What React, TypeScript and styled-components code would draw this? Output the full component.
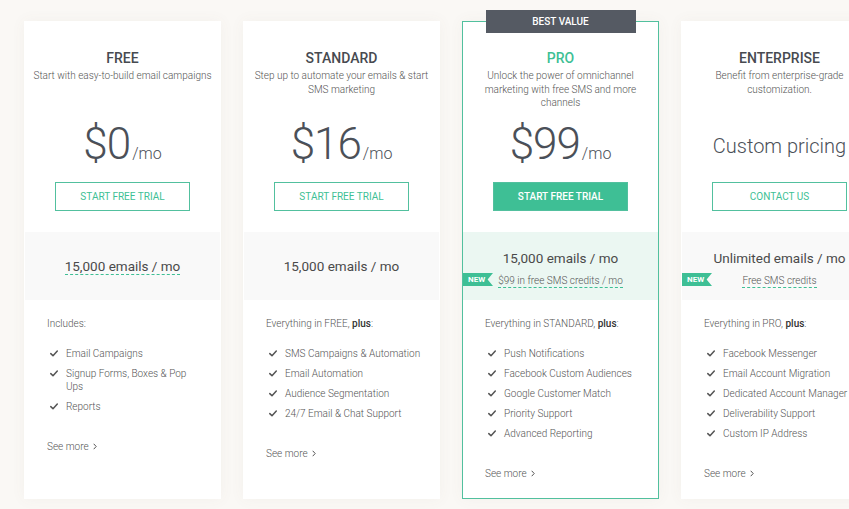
import React from "react";
import styled, { createGlobalStyle } from "styled-components";

const GREEN = "#3ebf95";
const BORDER_GREEN = "#52c09e";

const GlobalStyle = createGlobalStyle`
  html, body { margin: 0; padding: 0; background: #faf8f5; overflow: hidden; }
  body { font-family: Roboto, "Noto Sans", "Liberation Sans", sans-serif; -webkit-font-smoothing: antialiased; }
  * { box-sizing: border-box; }
`;

const Page = styled.div`
  display: flex;
  gap: 22px;
  padding: 21px 0 0 24px;
  height: 509px;
`;

const Card = styled.div<{ $featured?: boolean }>`
  position: relative;
  flex: 0 0 197px;
  height: 478px;
  background: #fff;
  border: 1px solid ${(p) => (p.$featured ? BORDER_GREEN : "transparent")};
  display: flex;
  flex-direction: column;
  box-shadow: 0 0 14px rgba(120, 100, 70, 0.05);
`;

const BestValue = styled.div`
  position: absolute;
  top: -12px;
  left: 50%;
  transform: translateX(-50%);
  width: 150px;
  height: 23px;
  background: #555a63;
  color: #fff;
  font-size: 10px;
  font-weight: 500;
  line-height: 23px;
  text-align: center;
`;

const Header = styled.div`
  height: 210px;
  padding-top: 28px;
  display: flex;
  flex-direction: column;
  align-items: center;
`;

const Title = styled.div<{ $featured?: boolean }>`
  font-size: 14px;
  line-height: 16px;
  font-weight: 500;
  color: ${(p) => (p.$featured ? GREEN : "#474a50")};
`;

const Desc = styled.div`
  margin-top: 3px;
  height: 40px;
  padding: 0 6px;
  font-size: 10px;
  line-height: 13.5px;
  font-weight: 300;
  color: #555;
  text-align: center;
`;

const PriceRow = styled.div`
  height: 64px;
  width: 100%;
  display: flex;
  align-items: flex-end;
  justify-content: center;
  padding-bottom: 7px;
`;

const Price = styled.div`
  display: inline-flex;
  align-items: baseline;
  color: #4b5058;
  font-weight: 300;
`;

const Amount = styled.span`
  font-size: 44px;
  line-height: 44px;
  letter-spacing: -1px;
`;

const Per = styled.span`
  font-size: 16px;
  line-height: 16px;
  margin-left: 2px;
`;

const CustomPrice = styled.div`
  font-size: 20px;
  line-height: 20px;
  font-weight: 300;
  color: #4b5058;
  margin-bottom: 10px;
`;

const Button = styled.button<{ $filled?: boolean }>`
  margin-top: 9px;
  width: 135px;
  height: 29px;
  border: 1px solid ${BORDER_GREEN};
  background: ${(p) => (p.$filled ? GREEN : "#fff")};
  color: ${(p) => (p.$filled ? "#fff" : GREEN)};
  font-family: inherit;
  font-size: 10px;
  font-weight: ${(p) => (p.$filled ? 500 : 400)};
  text-transform: uppercase;
  padding: 0;
  cursor: pointer;
`;

const Band = styled.div<{ $featured?: boolean; $stacked?: boolean }>`
  position: relative;
  height: 68px;
  background: ${(p) => (p.$featured ? "#ebf7f2" : "#f9f9f9")};
  display: flex;
  flex-direction: column;
  align-items: center;
  justify-content: center;
  padding-top: ${(p) => (p.$stacked ? 5 : 0)}px;
`;

const Emails = styled.span<{ $dashed?: boolean }>`
  font-size: 13.5px;
  line-height: 16px;
  color: #4a4a4a;
  border-bottom: 1px dashed ${(p) => (p.$dashed ? GREEN : "transparent")};
`;

const SubCredit = styled.span`
  margin-top: 8px;
  font-size: 10px;
  line-height: 12px;
  font-weight: 300;
  color: #555;
  border-bottom: 1px dashed ${GREEN};
`;

const NewBadge = styled.span`
  position: absolute;
  left: 0;
  top: 41px;
  width: 30px;
  height: 13px;
  padding-left: 5px;
  background: ${GREEN};
  color: #fff;
  font-size: 8px;
  font-weight: 700;
  line-height: 13px;
  clip-path: polygon(0 0, 100% 0, 82% 50%, 100% 100%, 0 100%);
`;

const Features = styled.div`
  flex: 1;
  padding: 17px 18px 0 22px;
`;

const FeatHead = styled.div`
  font-size: 10px;
  line-height: 13px;
  font-weight: 300;
  color: #555;
  strong { font-weight: 500; color: #333; }
`;

const List = styled.ul`
  margin: 17px 0 0;
  padding: 0 0 0 3px;
  list-style: none;
  display: flex;
  flex-direction: column;
  gap: 7px;
`;

const Item = styled.li`
  display: flex;
  gap: 8px;
  font-size: 10px;
  line-height: 13px;
  font-weight: 300;
  color: #555;
  svg { flex: 0 0 8px; margin-top: 3px; }
`;

const SeeMore = styled.a`
  margin-top: 27px;
  display: inline-flex;
  align-items: center;
  gap: 4px;
  font-size: 10px;
  line-height: 13px;
  font-weight: 300;
  color: #555;
  text-decoration: none;
`;

const Check = () => (
  <svg width="8" height="7" viewBox="0 0 8 7" fill="none">
    <polyline points="0.8,3.6 3,5.8 7.3,1" stroke="#555" strokeWidth="1.5" strokeLinecap="round" strokeLinejoin="round" />
  </svg>
);

const Chevron = () => (
  <svg width="4" height="7" viewBox="0 0 4 7" fill="none">
    <polyline points="0.7,0.8 3.2,3.5 0.7,6.2" stroke="#555" strokeWidth="1" />
  </svg>
);

type Plan = {
  name: string;
  desc: string;
  price?: string;
  button: string;
  emails: string;
  dashed?: boolean;
  credit?: string;
  featured?: boolean;
  head: React.ReactNode;
  items: string[];
};

const plans: Plan[] = [
  {
    name: "FREE",
    desc: "Start with easy-to-build email campaigns",
    price: "$0",
    button: "Start free trial",
    emails: "15,000 emails / mo",
    dashed: true,
    head: "Includes:",
    items: ["Email Campaigns", "Signup Forms, Boxes & Pop Ups", "Reports"],
  },
  {
    name: "STANDARD",
    desc: "Step up to automate your emails & start SMS marketing",
    price: "$16",
    button: "Start free trial",
    emails: "15,000 emails / mo",
    head: (
      <>
        Everything in FREE, <strong>plus</strong>:
      </>
    ),
    items: ["SMS Campaigns & Automation", "Email Automation", "Audience Segmentation", "24/7 Email & Chat Support"],
  },
  {
    name: "PRO",
    desc: "Unlock the power of omnichannel marketing with free SMS and more channels",
    price: "$99",
    button: "Start free trial",
    emails: "15,000 emails / mo",
    credit: "$99 in free SMS credits / mo",
    featured: true,
    head: (
      <>
        Everything in STANDARD, <strong>plus</strong>:
      </>
    ),
    items: ["Push Notifications", "Facebook Custom Audiences", "Google Customer Match", "Priority Support", "Advanced Reporting"],
  },
  {
    name: "ENTERPRISE",
    desc: "Benefit from enterprise-grade customization.",
    button: "Contact us",
    emails: "Unlimited emails / mo",
    credit: "Free SMS credits",
    head: (
      <>
        Everything in PRO, <strong>plus</strong>:
      </>
    ),
    items: ["Facebook Messenger", "Email Account Migration", "Dedicated Account Manager", "Deliverability Support", "Custom IP Address"],
  },
];

export default function App() {
  return (
    <>
      <GlobalStyle />
      <Page>
        {plans.map((p) => (
          <Card key={p.name} $featured={p.featured}>
            {p.featured && <BestValue>BEST VALUE</BestValue>}
            <Header>
              <Title $featured={p.featured}>{p.name}</Title>
              <Desc>{p.desc}</Desc>
              <PriceRow>
                {p.price ? (
                  <Price>
                    <Amount>{p.price}</Amount>
                    <Per>/mo</Per>
                  </Price>
                ) : (
                  <CustomPrice>Custom pricing</CustomPrice>
                )}
              </PriceRow>
              <Button $filled={p.featured}>{p.button}</Button>
            </Header>
            <Band $featured={p.featured} $stacked={!!p.credit}>
              <Emails $dashed={p.dashed}>{p.emails}</Emails>
              {p.credit && <SubCredit>{p.credit}</SubCredit>}
              {p.credit && <NewBadge>NEW</NewBadge>}
            </Band>
            <Features>
              <FeatHead>{p.head}</FeatHead>
              <List>
                {p.items.map((it) => (
                  <Item key={it}>
                    <Check />
                    <span>{it}</span>
                  </Item>
                ))}
              </List>
              <SeeMore href="#">
                See more <Chevron />
              </SeeMore>
            </Features>
          </Card>
        ))}
      </Page>
    </>
  );
}
